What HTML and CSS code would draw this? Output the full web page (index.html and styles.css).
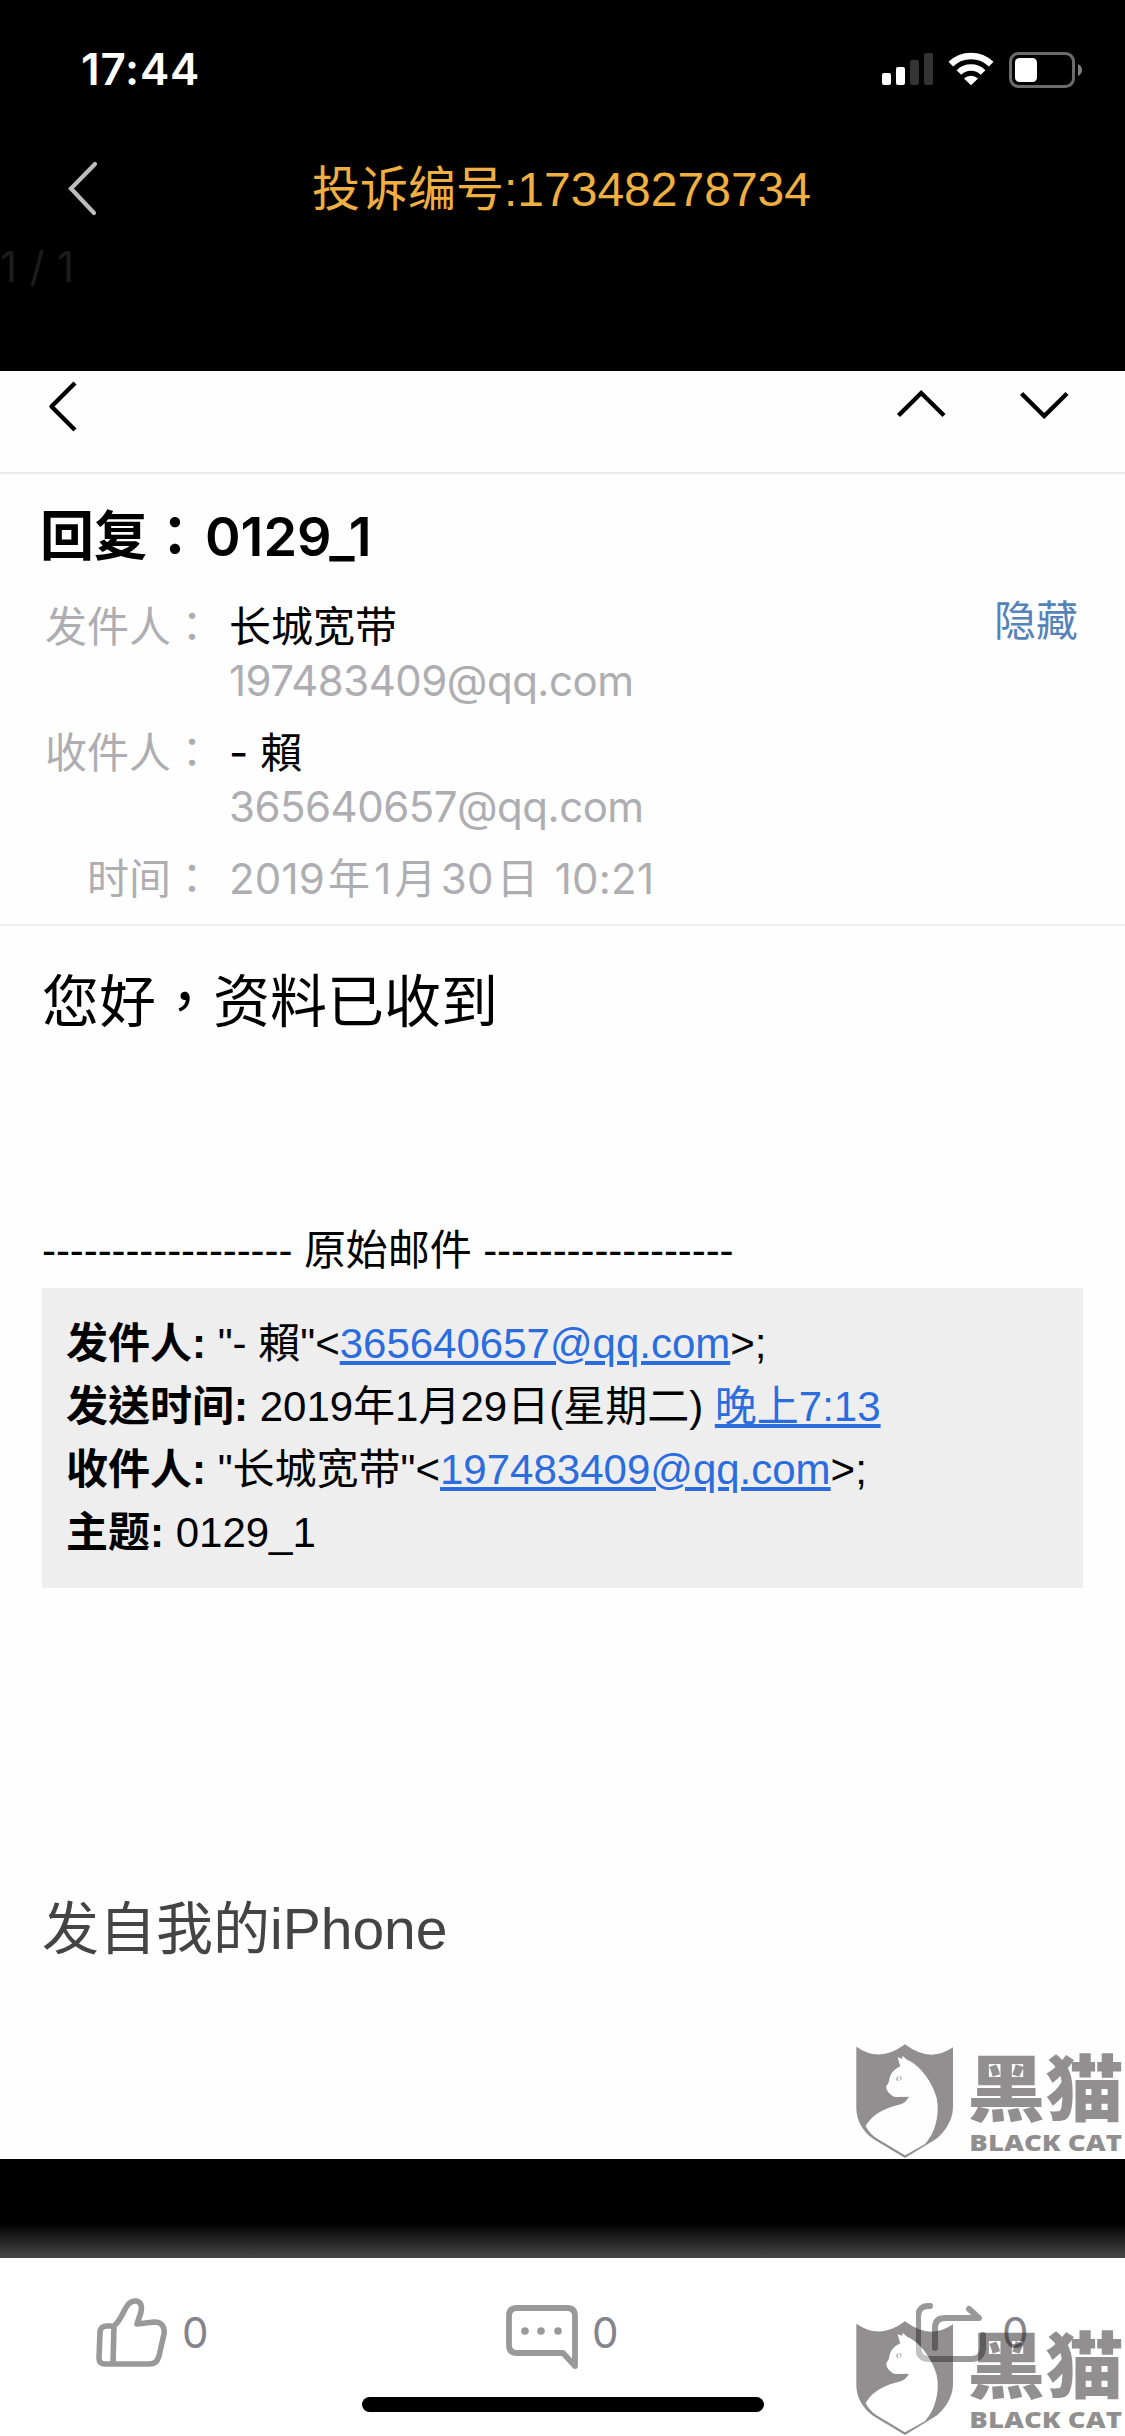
FILE: index.html
```html
<!DOCTYPE html>
<html lang="zh-TW">
  <head>
    <meta charset="UTF-8" />
    <meta name="viewport" content="width=device-width, initial-scale=1.0" />
    <title>投诉编号:17348278734</title>
    <link rel="stylesheet" href="styles.css">
  </head>
  <body>
    <header class="status-bar">
      <span class="time">17:44</span>
      <div class="status-icons">
        <svg width="52" height="36" viewBox="0 0 52 36">
          <rect x="0" y="22" width="9" height="12" rx="2" fill="#fff" />
          <rect x="14" y="16" width="9" height="18" rx="2" fill="#fff" />
          <rect x="28" y="9" width="9" height="25" rx="2" fill="#333" />
          <rect x="42" y="2" width="9" height="32" rx="2" fill="#333" />
        </svg>
        <svg class="wifi" width="46" height="36" viewBox="0 0 46 36">
          <g fill="none" stroke="#fff" stroke-width="6.6">
            <path d="M2.8 13.2a29 29 0 0 1 40.4 0" />
            <path d="M10.9 21.5a17.3 17.3 0 0 1 24.2 0" />
          </g>
          <path d="M16 27.5a10 10 0 0 1 14 0L23 34.3z" fill="#fff" />
        </svg>
        <svg width="76" height="38" viewBox="0 0 76 38">
          <rect x="1.5" y="2.5" width="63" height="33" rx="8" fill="none" stroke="#6b6b6b" stroke-width="3" />
          <rect x="6" y="7" width="22" height="24" rx="4.5" fill="#fff" />
          <path d="M69 13q4 2 4 6t-4 6z" fill="#808080" />
        </svg>
      </div>
    </header>

    <nav class="top-nav">
      <svg class="nav-back" width="32" height="56" viewBox="0 0 32 56">
        <path d="M28 3L4 27.5L27 52" fill="none" stroke="#bdbdbd" stroke-width="4.2" stroke-linecap="round" />
      </svg>
      <h1>投诉编号:17348278734</h1>
    </nav>
    <div class="counter">1 / 1</div>

    <main class="mail">
      <div class="mail-toolbar">
        <svg width="30" height="52" viewBox="0 0 30 52">
          <path d="M28 2L4.5 25.5L28 49" fill="none" stroke="#000" stroke-width="4.4" stroke-linejoin="round" />
        </svg>
        <div class="mail-arrows">
          <svg width="50" height="30" viewBox="0 0 50 30">
            <path d="M2.5 26.5L25.2 4L48 26.5" fill="none" stroke="#000" stroke-width="4.4" />
          </svg>
          <svg width="50" height="30" viewBox="0 0 50 30">
            <path d="M2.5 4.5L25.2 27L48 4.5" fill="none" stroke="#000" stroke-width="4.4" />
          </svg>
        </div>
      </div>

      <section class="mail-head">
        <h2>回复：<span class="subject">0129_1</span></h2>
        <a class="hide-link">隐藏</a>
        <div class="field">
          <span class="label">发件人：</span>
          <div class="value">
            <p class="name">长城宽带</p>
            <p class="address">197483409@qq.com</p>
          </div>
        </div>
        <div class="field">
          <span class="label">收件人：</span>
          <div class="value">
            <p class="name">- 賴</p>
            <p class="address">365640657@qq.com</p>
          </div>
        </div>
        <div class="field">
          <span class="label">时间：</span>
          <div class="value">
            <p class="date">2019<i>年</i>1<i>月</i>30<i>日</i> 10:21</p>
          </div>
        </div>
      </section>

      <article class="mail-body">
        <p class="reply">您好，资料已收到</p>
        <p class="divider">------------------ 原始邮件 ------------------</p>
        <div class="quote">
          <p><b>发件人:</b> "- 賴"&lt;<a>365640657@qq.com</a>&gt;;</p>
          <p><b>发送时间:</b> 2019年1月29日(星期二) <a>晚上7:13</a></p>
          <p><b>收件人:</b> "长城宽带"&lt;<a>197483409@qq.com</a>&gt;;</p>
          <p><b>主题:</b> 0129_1</p>
        </div>
        <p class="signature">发自我的iPhone</p>
      </article>
    </main>

    <div class="shade"></div>

    <footer class="actions">
      <div class="action like">
        <svg width="72" height="80" viewBox="0 0 72 80">
          <g fill="none" stroke="#999" stroke-width="5.6" stroke-linejoin="round">
            <path d="M19 29C28 21 29 5 39 5C46 5 46 12 45 16L41 28L58 26C66 26 69 31 68 38L63 60C61 66 59 68 53 68H9C5 68 3 66 3 62L4 37C4 32 7 30 11 30H19" />
            <path d="M18 29L17 68" />
          </g>
        </svg>
        <span>0</span>
      </div>
      <div class="action comment">
        <svg width="72" height="80" viewBox="0 0 72 80">
          <path d="M11 12H61Q69 12 69 20V70L57 57H11Q3 57 3 49V20Q3 12 11 12Z" fill="none" stroke="#999" stroke-width="5.8" stroke-linejoin="round" />
          <g fill="#999">
            <circle cx="19" cy="35" r="3.8" />
            <circle cx="35" cy="35" r="3.8" />
            <circle cx="52" cy="35" r="3.8" />
          </g>
        </svg>
        <span>0</span>
      </div>
      <div class="action share">
        <svg width="72" height="80" viewBox="0 0 72 80">
          <g fill="none" stroke="#999" stroke-width="6" stroke-linecap="round" stroke-linejoin="round">
            <path d="M14 10Q2 9 2 22V50Q2 63 13 63H55Q67 63 67 51V39" />
            <path d="M19 52V32Q19 22 29 22H63L53 13" />
          </g>
        </svg>
        <span>0</span>
      </div>
    </footer>
    <div class="home-indicator"></div>

    <svg class="watermark mark-top" viewBox="0 0 855 420">
      <g id="black-cat">
        <path class="ink" fill-rule="evenodd" d="M49 80Q120 130 195 73Q270 130 339 82V262C339 300 312 343 282 361L195 414L100 357C68 335 49 300 49 265ZM77 318C98 280 140 263 178 254Q200 247 207 230L165 231C150 225 138 212 139 198C151 188 146 170 157 157Q166 146 181 139L173 112L187 117L188 108L203 121C235 132 277 185 290 235C300 285 285 340 255 372L195 406L110 355Q88 340 77 318ZM168 174Q175 165 184 170Q188 178 176 184Q168 184 168 174Z" />
        <path class="cat" d="M77 318C98 280 140 263 178 254Q200 247 207 230L165 231C150 225 138 212 139 198C151 188 146 170 157 157Q166 146 181 139L173 112L187 117L188 108L203 121C235 132 277 185 290 235C300 285 285 340 255 372L195 406L110 355Q88 340 77 318Z" />
        <ellipse class="pupil" cx="177" cy="176" rx="3" ry="7" />
        <text class="ink brand" x="382" y="285" textLength="468" lengthAdjust="spacingAndGlyphs">黑猫</text>
        <text class="ink latin" x="388" y="394" textLength="458" lengthAdjust="spacingAndGlyphs">BLACK CAT</text>
      </g>
    </svg>
    <svg class="watermark mark-bottom" viewBox="0 0 855 420">
      <use href="#black-cat" />
    </svg>
  </body>
</html>
```

FILE: styles.css
```css
* {
  margin: 0;
  padding: 0;
  box-sizing: border-box;
}

body {
  position: relative;
  width: 1125px;
  height: 2436px;
  overflow: hidden;
  background: #000;
  color: #000;
  font-family: Inter, "Noto Sans CJK TC", sans-serif;
  font-size: 42px;
}

svg {
  display: block;
}

/* Status bar */
.status-bar {
  display: flex;
  justify-content: space-between;
  height: 132px;
  padding: 43px 40px 0 81px;
  color: #fff;
}

.time {
  font-size: 44px;
  font-weight: 600;
  line-height: 52px;
  letter-spacing: 0.8px;
}

.status-icons {
  display: flex;
  padding-top: 8px;
}

.wifi {
  margin: 0 15px 0 14px;
}

/* Top navigation */
.top-nav {
  display: flex;
  height: 114px;
  padding: 29px 0 0 67px;
}

.top-nav h1 {
  width: 500px;
  margin-left: 213px;
  color: #efaf41;
  font-family: "Liberation Sans", "Noto Sans CJK TC", sans-serif;
  font-size: 48px;
  font-weight: 400;
  line-height: 57px;
  white-space: nowrap;
}

.counter {
  height: 125px;
  color: #1c1c1c;
  line-height: 42px;
  letter-spacing: 0.3px;
}

/* Mail */
.mail {
  height: 1788px;
  background: #fefefe;
}

.mail-toolbar {
  display: flex;
  justify-content: space-between;
  height: 103px;
  padding: 10px 56px 0 47px;
  border-bottom: 2px solid #ebebeb;
}

.mail-arrows {
  display: flex;
  gap: 73px;
  padding-top: 8px;
}

.mail-head {
  position: relative;
  height: 452px;
  padding: 30px 40px 0 40px;
  border-bottom: 2px solid #efefef;
}

.mail-head h2 {
  margin-bottom: 30px;
  font-size: 54px;
  font-weight: 600;
  line-height: 66px;
}

.subject {
  margin-left: 3px;
}

.hide-link {
  position: absolute;
  top: 120px;
  right: 47px;
  color: #5583b9;
  line-height: 54px;
}

.field {
  display: flex;
  margin-bottom: 18px;
  line-height: 54px;
}

.label {
  width: 168px;
  margin: 0 16px 0 5px;
  color: #aeaeb2;
  text-align: right;
  white-space: nowrap;
}

.address,
.date {
  color: #aeaeb2;
}

.address {
  letter-spacing: -0.5px;
}

.date {
  letter-spacing: 0.2px;
}

.date i {
  margin: 0 4px 0 3px;
  font-style: normal;
}

.mail-body {
  padding: 39px 42px 0;
  font-family: "Liberation Sans", "Noto Sans CJK TC", sans-serif;
}

.reply {
  margin-bottom: 180px;
  font-size: 57px;
  line-height: 74px;
}

.divider {
  margin-bottom: 6px;
  line-height: 63px;
  letter-spacing: -0.08px;
}

.quote {
  height: 300px;
  padding: 24px;
  background: #eee;
  line-height: 63px;
}

.quote a {
  color: #2b6cdf;
  text-decoration: underline;
}

.signature {
  margin-top: 304px;
  color: #444;
  font-size: 57px;
  line-height: 74px;
}

/* Bottom bar */
.shade {
  height: 99px;
  background: linear-gradient(#000 65%, #484848);
}

.actions {
  display: flex;
  height: 178px;
  padding: 38px 0 0 96px;
  background: #fff;
  color: #85838c;
}

.action {
  display: flex;
  flex: none;
  gap: 14px;
  width: 410px;
  line-height: 74px;
}

.share {
  width: auto;
}

.home-indicator {
  position: absolute;
  left: 362px;
  top: 2397px;
  width: 402px;
  height: 15px;
  border-radius: 8px;
  background: #000;
}

/* Watermark */
.watermark {
  position: absolute;
  left: 840px;
  width: 285px;
  height: 140px;
}

.mark-top {
  top: 2020px;
}

.mark-bottom {
  top: 2297px;
}

.ink {
  fill: rgba(35, 31, 32, 0.5);
}

.cat {
  fill: rgba(255, 255, 255, 0.4);
}

.pupil {
  fill: #fff;
}

.brand {
  font-family: "Noto Sans CJK TC", sans-serif;
  font-size: 215px;
  font-weight: 900;
}

.latin {
  font-family: "Open Sans", sans-serif;
  font-size: 69px;
  font-weight: 800;
}
```
